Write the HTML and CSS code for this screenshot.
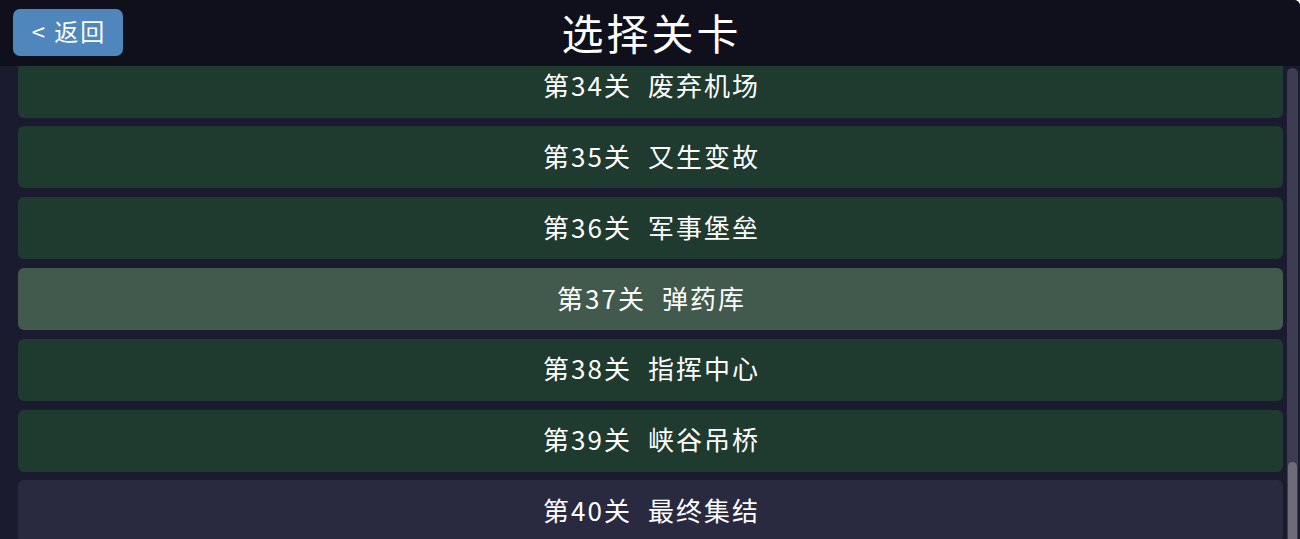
FILE: index.html
```html
<!DOCTYPE html>
<html lang="zh-CN">
<head>
<meta charset="utf-8">
<title>选择关卡</title>
<link rel="stylesheet" href="styles.css">
</head>
<body>
<div class="app">
  <header class="topbar">
    <button class="back">&lt; 返回</button>
    <h1 class="title">选择关卡</h1>
  </header>
  <main class="body">
    <div class="viewport">
      <ul class="levels">
        <li class="level"><span>第34关</span><span>废弃机场</span></li>
        <li class="level"><span>第35关</span><span>又生变故</span></li>
        <li class="level"><span>第36关</span><span>军事堡垒</span></li>
        <li class="level hover"><span>第37关</span><span>弹药库</span></li>
        <li class="level"><span>第38关</span><span>指挥中心</span></li>
        <li class="level"><span>第39关</span><span>峡谷吊桥</span></li>
        <li class="level locked"><span>第40关</span><span>最终集结</span></li>
      </ul>
    </div>
    <div class="scrollbar"><div class="thumb"></div></div>
  </main>
</div>
</body>
</html>
```
FILE: styles.css
```css
html, body {
  margin: 0;
  padding: 0;
  height: 100%;
  background: #ffffff;
  overflow: hidden;
}
body {
  font-family: "Noto Sans CJK SC", "Noto Sans", sans-serif;
  color: #ffffff;
}
.app {
  height: 539px;
  display: flex;
  flex-direction: column;
  background: #1b1b2f;
  border-top-right-radius: 6px;
  overflow: hidden;
}
.topbar {
  height: 66px;
  flex: none;
  background: #0f101b;
  display: flex;
  align-items: center;
  position: relative;
}
.back {
  margin-left: 13px;
  margin-top: -2px;
  width: 110px;
  height: 47px;
  border: none;
  border-radius: 7px;
  background: #4f86bc;
  color: #ffffff;
  font-family: "Noto Sans CJK SC", sans-serif;
  font-size: 24px;
  letter-spacing: 2px;
  text-indent: 2px;
  padding: 0 0 2px 0;
  line-height: 1;
  position: relative;
  z-index: 1;
}
.title {
  position: absolute;
  left: 0;
  right: 0;
  top: 0;
  margin: 0;
  height: 66px;
  line-height: 64px;
  text-align: center;
  font-size: 42px;
  font-weight: 400;
  letter-spacing: 3px;
  text-indent: 3px;
}
.body {
  flex: 1;
  display: flex;
  min-height: 0;
}
.viewport {
  flex: 1;
  overflow: hidden;
  padding-left: 18px;
}
.levels {
  list-style: none;
  margin: -10.4px 0 0 0;
  padding: 0;
  display: flex;
  flex-direction: column;
  gap: 8.8px;
}
.level {
  height: 62px;
  box-sizing: border-box;
  padding: 0 0 4px 2px;
  border-radius: 6px;
  background: #1f3a2e;
  display: flex;
  justify-content: center;
  align-items: center;
  gap: 16px;
  font-size: 26px;
  letter-spacing: 2px;
}
.level.hover { background: #42594e; }
.level.locked { background: #29293f; }
.scrollbar {
  flex: none;
  width: 11px;
  margin: 2px 2px 0 4px;
  border-radius: 6px 6px 0 0;
  background: #3d3c53;
  display: flex;
  flex-direction: column;
  align-items: center;
}
.thumb {
  width: 9px;
  margin-top: 394px;
  flex: 1;
  border-radius: 5px 5px 0 0;
  background: #6d6c78;
}
```
